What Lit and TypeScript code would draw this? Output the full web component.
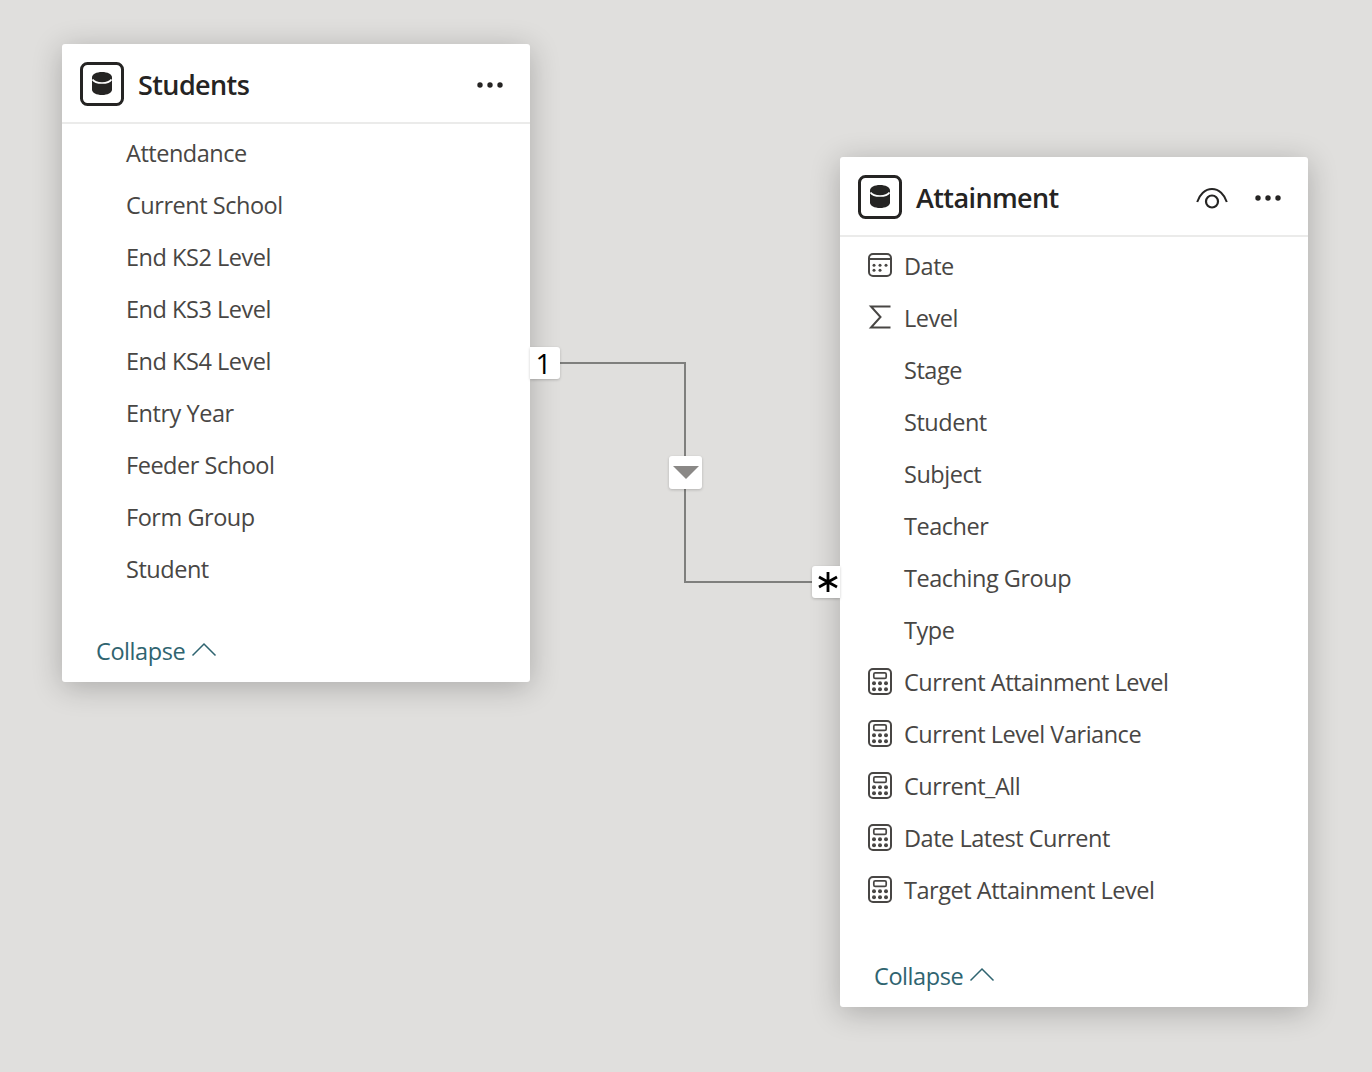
import { LitElement, html, css, svg } from "lit";
import { customElement } from "lit/decorators.js";

type Kind = "none" | "cal" | "sum" | "calc";

const dbIcon = html`<svg class="db" width="44" height="44" viewBox="0 0 44 44">
  <rect x="1.500" y="1.500" width="41" height="41" rx="6" fill="none" stroke="#252423" stroke-width="3"></rect>
  <path d="M12 15.500c0-3.300 4.500-5.500 10-5.500s10 2.200 10 5.500v12c0 3.300-4.500 5.500-10 5.500s-10-2.200-10-5.500z" fill="#252423"></path>
  <path d="M12.500 17.500c1.500 2.200 5.200 3.500 9.500 3.500s8-1.300 9.500-3.500" fill="none" stroke="#fff" stroke-width="1.700"></path>
</svg>`;

const dots = html`<svg width="28" height="8" viewBox="0 0 28 8" fill="#252423">
  <circle cx="4" cy="4" r="2.700"></circle><circle cx="14" cy="4" r="2.700"></circle><circle cx="24" cy="4" r="2.700"></circle>
</svg>`;

const eye = html`<svg width="32" height="22" viewBox="0 0 32 22" fill="none" stroke="#252423">
  <path d="M1.200 15C3.500 7.500 9 2 16 2s12.500 5.500 14.800 13" stroke-width="2"></path>
  <circle cx="16" cy="14.500" r="6" stroke-width="2.200"></circle>
</svg>`;

const icons: Record<Kind, unknown> = {
  none: null,
  cal: html`<svg width="24" height="24" viewBox="0 0 24 24">
    <rect x="1" y="1" width="22" height="22" rx="4" fill="none" stroke="#484644" stroke-width="2"></rect>
    <path d="M1 6h22" stroke="#484644" stroke-width="2"></path>
    ${[6, 12, 18].map((x) => svg`<circle cx=${x} cy="12.300" r="1.500" fill="#484644"></circle>`)}
    ${[6, 12].map((x) => svg`<circle cx=${x} cy="17.300" r="1.500" fill="#484644"></circle>`)}
  </svg>`,
  sum: html`<svg width="24" height="24" viewBox="0 0 24 24">
    <path d="M22.500 1.500H3l9.500 10.500L3 22.500h19.500" fill="none" stroke="#484644" stroke-width="2"></path>
  </svg>`,
  calc: html`<svg width="24" height="27" viewBox="0 0 24 27">
    <rect x="1" y="1" width="22" height="25" rx="4" fill="none" stroke="#484644" stroke-width="2"></rect>
    <rect x="5.800" y="4.800" width="12.400" height="5.600" rx="1.400" fill="none" stroke="#484644" stroke-width="1.700"></rect>
    ${[15.300, 21.300].map((y) =>
      [6, 12, 18].map((x) => svg`<circle cx=${x} cy=${y} r="2" fill="#484644"></circle>`)
    )}
  </svg>`,
};

const students: [Kind, string][] = [
  "Attendance", "Current School", "End KS2 Level", "End KS3 Level", "End KS4 Level",
  "Entry Year", "Feeder School", "Form Group", "Student",
].map((t) => ["none", t]);

const attainment: [Kind, string][] = [
  ["cal", "Date"], ["sum", "Level"], ["none", "Stage"], ["none", "Student"], ["none", "Subject"],
  ["none", "Teacher"], ["none", "Teaching Group"], ["none", "Type"],
  ["calc", "Current Attainment Level"], ["calc", "Current Level Variance"], ["calc", "Current_All"],
  ["calc", "Date Latest Current"], ["calc", "Target Attainment Level"],
];

@customElement("app-root")
export class AppRoot extends LitElement {
  static styles = css`
    :host {
      display: block;
      position: relative;
      width: 1372px;
      height: 1072px;
      overflow: hidden;
      background: #e0dfdd;
      font-family: "Open Sans", "Noto Sans", sans-serif;
    }
    .lines { position: absolute; left: 0; top: 0; }
    .card {
      position: absolute;
      width: 468px;
      display: flex;
      flex-direction: column;
      background: #fff;
      border-radius: 3px;
      box-shadow: 0 5px 30px rgba(0, 0, 0, 0.24);
    }
    .students { left: 62px; top: 44px; height: 638px; }
    .attainment { left: 840px; top: 157px; height: 850px; }
    .head {
      height: 80px;
      flex: none;
      box-sizing: border-box;
      display: flex;
      align-items: center;
      padding: 2px 26px 0 18px;
      border-bottom: 2px solid #ebebea;
      margin-bottom: 3px;
    }
    .db { flex: none; }
    .title {
      margin-left: 14px;
      flex: 1;
      font-size: 27px;
      font-weight: 600;
      color: #252423;
      letter-spacing: -0.6px;
    }
    .eye { display: flex; margin-right: 26px; margin-top: 2px; }
    .more { display: flex; margin-top: 2px; }
    .row {
      height: 52px;
      flex: none;
      display: flex;
      align-items: center;
      padding-left: 28px;
      font-size: 23.5px;
      letter-spacing: -0.47px;
      color: #484644;
    }
    .slot { width: 24px; margin-right: 12px; margin-top: -2px; display: flex; justify-content: center; align-items: center; }
    .foot {
      margin-top: auto;
      margin-bottom: 15px;
      margin-left: 34px;
      display: flex;
      align-items: center;
      gap: 6px;
      height: 32px;
      font-size: 23.5px;
      letter-spacing: -0.42px;
      color: #2f6470;
    }
    .foot svg { margin-top: -4px; }
    .badge {
      position: absolute;
      display: flex;
      align-items: center;
      justify-content: center;
      background: #fff;
      color: #000;
      box-shadow: 0 1px 3px rgba(0, 0, 0, 0.2);
    }
    .one {
      left: 530px; top: 347px; width: 30px; height: 32px;
      border-radius: 0 3px 3px 0;
      font-size: 28px;
      font-weight: 500;
      box-sizing: border-box;
      padding-right: 3px;
    }
    .many {
      left: 812px; top: 566px; width: 28px; height: 32px;
      border-radius: 3px 0 0 3px;
      box-sizing: border-box;
      padding-left: 4px;
    }
    .filter {
      left: 669px; top: 456px; width: 33px; height: 33px;
      border-radius: 3px;
    }
  `;

  private renderCard(cls: string, title: string, rows: [Kind, string][], withEye: boolean) {
    return html`<section class="card ${cls}">
      <header class="head">
        ${dbIcon}
        <div class="title">${title}</div>
        ${withEye ? html`<span class="eye">${eye}</span>` : null}
        <span class="more">${dots}</span>
      </header>
      ${rows.map(
        ([k, t]) => html`<div class="row"><span class="slot">${icons[k]}</span><span>${t}</span></div>`
      )}
      <div class="foot">
        <span>Collapse</span>
        <svg width="26" height="16" viewBox="0 0 26 16" fill="none" stroke="#2f6470" stroke-width="1.500"><path d="M1.500 14.500L13 3 24.500 14.500"></path></svg>
      </div>
    </section>`;
  }

  render() {
    return html`
      <svg class="lines" width="1372" height="1072" fill="none" stroke="#7f7f7d" stroke-width="2">
        <path d="M560 363H685V582H812"></path>
      </svg>
      ${this.renderCard("students", "Students", students, false)}
      ${this.renderCard("attainment", "Attainment", attainment, true)}
      <div class="badge one">1</div>
      <div class="badge many">
        <svg width="22" height="22" viewBox="0 0 22 22" stroke="#000" stroke-width="2.800"><path d="M11 1v20M2 6l18 10M20 6L2 16"></path></svg>
      </div>
      <div class="badge filter">
        <svg width="26" height="13" viewBox="0 0 26 13"><path d="M0 0h26L13 13z" fill="#8a8886"></path></svg>
      </div>
    `;
  }
}
